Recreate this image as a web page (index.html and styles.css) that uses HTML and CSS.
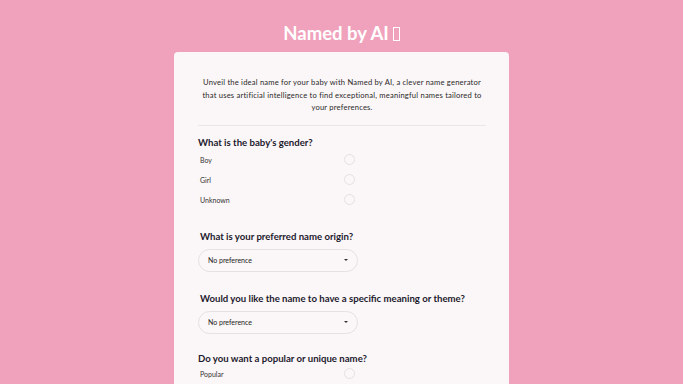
FILE: index.html
```html
<!DOCTYPE html>
<html>
<head>
<meta charset="utf-8">
<link rel="stylesheet" href="styles.css">
</head>
<body>
<div class="page">
  <h1 class="title">Named by AI <span class="tofu"></span></h1>
  <div class="card">
    <p class="intro">Unveil the ideal name for your baby with Named by AI, a clever name generator that uses artificial intelligence to find exceptional, meaningful names tailored to your preferences.</p>
    <hr class="divider">
    <div class="section">
      <h2 class="q">What is the baby's gender?</h2>
      <div class="opt"><span>Boy</span><span class="radio"></span></div>
      <div class="opt"><span>Girl</span><span class="radio"></span></div>
      <div class="opt"><span>Unknown</span><span class="radio"></span></div>
    </div>
    <div class="section">
      <h2 class="q q2">What is your preferred name origin?</h2>
      <div class="select"><span>No preference</span><span class="caret"></span></div>
    </div>
    <div class="section tight">
      <h2 class="q q2">Would you like the name to have a specific meaning or theme?</h2>
      <div class="select"><span>No preference</span><span class="caret"></span></div>
    </div>
    <div class="section">
      <h2 class="q q4">Do you want a popular or unique name?</h2>
      <div class="opt"><span>Popular</span><span class="radio"></span></div>
      <div class="opt"><span>Unique</span><span class="radio"></span></div>
    </div>
  </div>
</div>
</body>
</html>
```
FILE: styles.css
```css
html, body {
  margin: 0;
  padding: 0;
  background: #f0a2bc;
  font-family: "Lato", "Noto Sans", sans-serif;
  overflow: hidden;
}
.page {
  display: flex;
  flex-direction: column;
  align-items: center;
  padding-top: 22px;
}
.title {
  margin: 0 0 7px 0;
  color: #ffffff;
  font-size: 18.5px;
  font-weight: 700;
  line-height: 23px;
  display: flex;
  align-items: center;
  gap: 4px;
}
.tofu {
  display: inline-block;
  width: 7px;
  height: 14px;
  border: 1.2px solid #fff;
  box-sizing: border-box;
}
.card {
  width: 335px;
  box-sizing: border-box;
  background: #fbf6f7;
  border-radius: 4px;
  padding: 24px 23px 20px 24px;
}
.intro {
  margin: 0;
  font-size: 7.6px;
  line-height: 12.5px;
  letter-spacing: 0.2px;
  text-align: center;
  color: #2a2a2a;
  padding: 0 3px;
}
.divider {
  border: none;
  border-top: 1px solid #ebe5e7;
  margin: 11px 0 10px 0;
}
.section {
  margin-bottom: 20px;
}
.section.tight {
  margin-bottom: 18px;
}
.q {
  margin: 0;
  font-size: 9.6px;
  font-weight: 700;
  color: #1c1a2e;
  line-height: 14px;
}
.q2 {
  margin-left: 2px;
}
.q4 {
  margin-bottom: -2px;
}
.opt {
  display: flex;
  align-items: center;
  width: 155px;
  justify-content: space-between;
  height: 20px;
  font-size: 7px;
  color: #333;
  padding-left: 2px;
}
.radio {
  width: 11px;
  height: 11px;
  border: 1px solid #e6e0e2;
  border-radius: 50%;
  box-sizing: border-box;
}
.select {
  width: 160px;
  height: 23px;
  box-sizing: border-box;
  border: 1px solid #e6e0e2;
  border-radius: 12px;
  display: flex;
  align-items: center;
  justify-content: space-between;
  padding: 0 9px 0 9px;
  font-size: 7px;
  color: #222;
  margin-top: 5px;
}
.caret {
  width: 0;
  height: 0;
  border-left: 2.5px solid transparent;
  border-right: 2.5px solid transparent;
  border-top: 2.5px solid #333;
}
```
